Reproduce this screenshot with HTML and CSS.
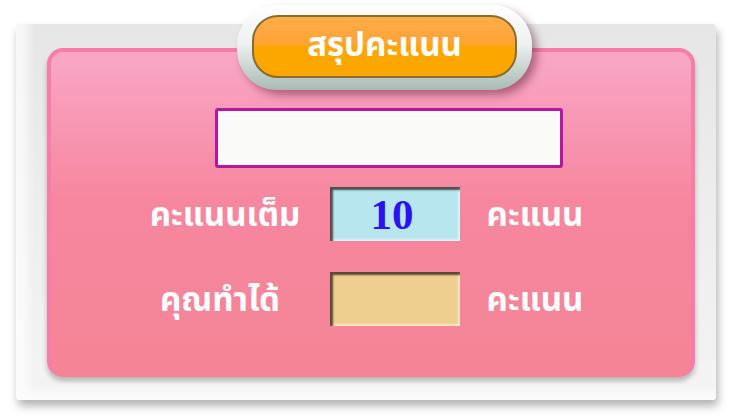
FILE: index.html
```html
<!DOCTYPE html>
<html lang="th">
<head>
    <meta charset="UTF-8">
    <meta name="viewport" content="width=device-width, initial-scale=1.0">
    <title>สรุปคะแนน</title>
    <link rel="stylesheet" href="styles.css">
</head>
<body>
    <div class="board">
        <div class="title">
            <div class="title-inner">สรุปคะแนน</div>
        </div>
        <div class="panel">
            <div class="name-box"></div>
            <div class="rows">
                <div class="label">คะแนนเต็ม</div>
                <div class="box box-full">10</div>
                <div class="unit">คะแนน</div>

                <div class="label label-got">คุณทำได้</div>
                <div class="box box-got"></div>
                <div class="unit">คะแนน</div>
            </div>
        </div>
    </div>
</body>
</html>
```

FILE: styles.css
```css
* {
    margin: 0;
    padding: 0;
    box-sizing: border-box;
}
body {
    background-color: #fff;
    font-family: "Noto Sans Thai", "Noto Sans", "DejaVu Sans", sans-serif;
    padding: 24px 21px 17px 16px;
}
.board {
    position: relative;
    width: 700px;
    height: 376px;
    padding: 24px 21px 23px 31px;
    border-radius: 4px;
    background: linear-gradient(to bottom, #e6e6e6 0%, #ececec 40%, #f4f4f4 100%);
    box-shadow: 2px 6px 8px rgba(0, 0, 0, .3), inset 12px -8px 10px rgba(255, 255, 255, .7);
}
/* judul */
.title {
    position: absolute;
    left: 221px;
    top: -19px;
    width: 295px;
    height: 85px;
    padding: 10px 15px 12px;
    border-radius: 40px;
    background: linear-gradient(to bottom, #ffffff 0%, #eef2f0 45%, #a8bab4 100%);
    box-shadow: 5px 5px 8px rgba(80, 20, 40, .45);
    z-index: 2;
}
.title-inner {
    width: 100%;
    height: 100%;
    border-radius: 26px;
    border: 2px solid #8c6c2c;
    background: linear-gradient(to bottom, #ffac48 0%, #ffa436 44%, #fda600 52%, #fba600 100%);
    display: flex;
    align-items: center;
    justify-content: center;
    color: #fff;
    font-size: 33px;
    font-weight: bold;
    padding-bottom: 2px;
}
/* panel pink */
.panel {
    width: 100%;
    height: 100%;
    padding: 56px 0 0 164px;
    border: 4px solid #f77ca8;
    border-bottom: none;
    border-radius: 16px;
    background: linear-gradient(to bottom, #f9a7c7 0%, #f6879f 45%, #f58496 100%);
    box-shadow: 0 4px 5px rgba(0, 0, 0, .25);
}
.name-box {
    width: 348px;
    height: 60px;
    border: 3px solid #b217a8;
    border-radius: 3px;
    background-color: #fafaf8;
}
.rows {
    margin: 19px 0 0 -75px;
    display: grid;
    grid-template-columns: 170px 130px 110px;
    grid-template-rows: 54px 54px;
    column-gap: 20px;
    row-gap: 31px;
}
.label, .unit {
    display: flex;
    align-items: center;
    justify-content: center;
    color: #fff;
    font-size: 33px;
    font-weight: bold;
    white-space: nowrap;
    padding-top: 4px;
}
.label-got {
    padding-right: 10px;
}
.box {
    display: flex;
    align-items: center;
    justify-content: center;
    box-shadow: inset 3px 3px 2px rgba(40, 30, 20, .75), inset -2px -2px 2px rgba(255, 255, 255, .5);
}
.box-full {
    background-color: #b8e6ee;
    color: #2b12f2;
    font-family: "Liberation Serif", serif;
    font-weight: bold;
    font-size: 43px;
    padding-right: 6px;
}
.box-got {
    background-color: #efcf90;
}
```
